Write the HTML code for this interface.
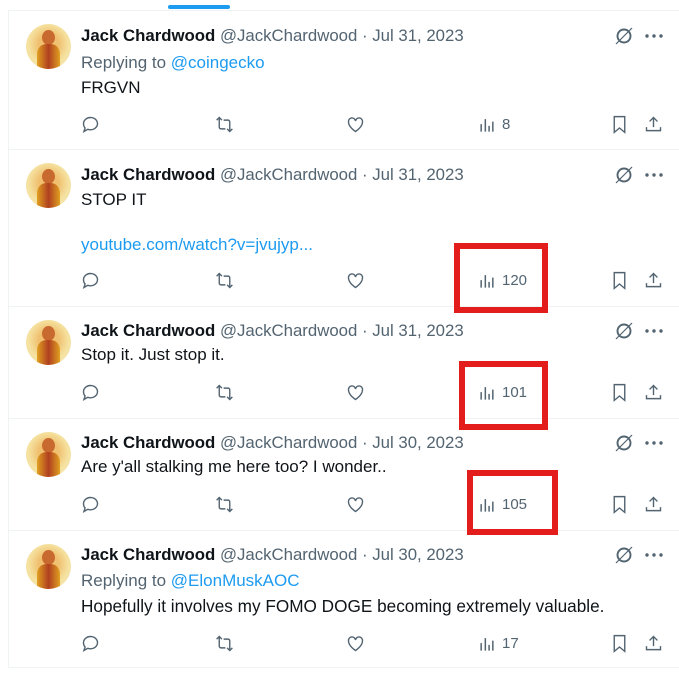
<!DOCTYPE html>
<html><head><meta charset="utf-8"><style>
*{margin:0;padding:0;box-sizing:border-box}
body{width:679px;height:678px;background:#fff;font-family:"Liberation Sans",sans-serif;position:relative;overflow:hidden;color:#0f1419}
.vl{position:absolute;left:8px;top:10px;width:1px;height:658px;background:#eff3f4}
.sep{position:absolute;left:8px;right:0;height:1px;background:#eff3f4}
.t{position:absolute;left:0;width:679px}
.av{position:absolute;left:26px;width:45px;height:45px;border-radius:50%;overflow:hidden;background:radial-gradient(circle at 50% 45%,#f0c070 0 30%,#f5e2a0 60%,#f2e6b8 100%)}
.av::before{content:"";position:absolute;left:16px;top:6px;width:13px;height:15px;border-radius:50%;background:#c86a30}
.av::after{content:"";position:absolute;left:11px;top:20px;width:23px;height:25px;background:linear-gradient(90deg,#e0a020,#b04020 50%,#e0a020);border-radius:40% 40% 0 0}
.tx{position:absolute;left:81px;font-size:17px;white-space:nowrap;line-height:20px}
.h{font-size:16.8px}
.n{font-weight:bold}
.g{color:#536471}
.b{color:#1d9bf0}
.ic{position:absolute}
.cnt{position:absolute;font-size:15px;color:#536471}
.red{position:absolute;border:6px solid #e31c1c}
</style></head><body>
<div style="position:absolute;left:168px;top:5px;width:62px;height:4px;border-radius:2px;background:#1d9bf0"></div>
<div class="vl"></div>
<div class="sep" style="top:10px"></div>
<div class="sep" style="top:149px"></div>
<div class="sep" style="top:306px"></div>
<div class="sep" style="top:418px"></div>
<div class="sep" style="top:530px"></div>
<div class="sep" style="top:667px"></div>

<svg width="0" height="0" style="position:absolute">
<defs>
<g id="reply"><path d="M4 11a8 7 0 1 1 5 6.5L4.5 20l1.3-4A7 7 0 0 1 4 11z" fill="none" stroke="#536471" stroke-width="1.6"/></g>
<g id="rt" fill="none" stroke="#536471" stroke-width="1.6"><path d="M3 7l3-3 3 3M6 4v11a2 2 0 0 0 2 2h5"/><path d="M21 17l-3 3-3-3M18 20V9a2 2 0 0 0-2-2h-5"/></g>
<g id="like"><path d="M12 20s-8-5-8-11a4 4 0 0 1 8-1 4 4 0 0 1 8 1c0 6-8 11-8 11z" fill="none" stroke="#536471" stroke-width="1.6"/></g>
<g id="views" stroke="#536471" stroke-width="1.8"><path d="M5 20V11M10 20V5M14.5 20V13M19 20V8"/></g>
<g id="bm"><path d="M6 3h12v18l-6-5-6 5z" fill="none" stroke="#536471" stroke-width="1.6"/></g>
<g id="sh" fill="none" stroke="#536471" stroke-width="1.6"><path d="M12 15V4M7.5 8.5 12 4l4.5 4.5M4 15v4h16v-4"/></g>
<g id="grok" fill="none" stroke="#536471" stroke-width="1.9"><circle cx="12" cy="12" r="6.5"/><path d="M4 20 20 4" stroke-width="1.2"/></g>
<g id="more" fill="#536471"><circle cx="5" cy="12" r="1.7"/><circle cx="12" cy="12" r="1.7"/><circle cx="19" cy="12" r="1.7"/></g>
</defs></svg>

<div class="t" style="top:10px">
<div class="av" style="top:14px"></div>
<div class="tx h" style="top:16px"><span class="n">Jack Chardwood</span> <span class="g">@JackChardwood · Jul 31, 2023</span></div>
<div class="tx g" style="top:43px">Replying to <span class="b">@coingecko</span></div>
<div class="tx" style="top:68px">FRGVN</div>
<svg class="ic" style="left:612px;top:14px" width="24" height="24"><use href="#grok"/></svg>
<svg class="ic" style="left:642px;top:14px" width="24" height="24"><use href="#more"/></svg>
<svg class="ic" style="left:80px;top:104px" width="21" height="21" viewBox="0 0 24 24"><use href="#reply"/></svg>
<svg class="ic" style="left:214px;top:104px" width="21" height="21" viewBox="0 0 24 24"><use href="#rt"/></svg>
<svg class="ic" style="left:345px;top:104px" width="21" height="21" viewBox="0 0 24 24"><use href="#like"/></svg>
<svg class="ic" style="left:477px;top:105px" width="20" height="20" viewBox="0 0 24 24"><use href="#views"/></svg>
<div class="cnt" style="left:502px;top:106px">8</div>
<svg class="ic" style="left:609px;top:104px" width="21" height="21" viewBox="0 0 24 24"><use href="#bm"/></svg>
<svg class="ic" style="left:643px;top:104px" width="21" height="21" viewBox="0 0 24 24"><use href="#sh"/></svg>
</div>

<div class="t" style="top:149px">
<div class="av" style="top:14px"></div>
<div class="tx h" style="top:16px"><span class="n">Jack Chardwood</span> <span class="g">@JackChardwood · Jul 31, 2023</span></div>
<div class="tx" style="top:41px">STOP IT</div>
<div class="tx b" style="top:86px">youtube.com/watch?v=jvujyp...</div>
<svg class="ic" style="left:612px;top:14px" width="24" height="24"><use href="#grok"/></svg>
<svg class="ic" style="left:642px;top:14px" width="24" height="24"><use href="#more"/></svg>
<svg class="ic" style="left:80px;top:121px" width="21" height="21" viewBox="0 0 24 24"><use href="#reply"/></svg>
<svg class="ic" style="left:214px;top:121px" width="21" height="21" viewBox="0 0 24 24"><use href="#rt"/></svg>
<svg class="ic" style="left:345px;top:121px" width="21" height="21" viewBox="0 0 24 24"><use href="#like"/></svg>
<svg class="ic" style="left:477px;top:122px" width="20" height="20" viewBox="0 0 24 24"><use href="#views"/></svg>
<div class="cnt" style="left:502px;top:123px">120</div>
<svg class="ic" style="left:609px;top:121px" width="21" height="21" viewBox="0 0 24 24"><use href="#bm"/></svg>
<svg class="ic" style="left:643px;top:121px" width="21" height="21" viewBox="0 0 24 24"><use href="#sh"/></svg>
</div>

<div class="t" style="top:306px">
<div class="av" style="top:14px"></div>
<div class="tx h" style="top:15px"><span class="n">Jack Chardwood</span> <span class="g">@JackChardwood · Jul 31, 2023</span></div>
<div class="tx" style="top:39px">Stop it. Just stop it.</div>
<svg class="ic" style="left:612px;top:13px" width="24" height="24"><use href="#grok"/></svg>
<svg class="ic" style="left:642px;top:13px" width="24" height="24"><use href="#more"/></svg>
<svg class="ic" style="left:80px;top:76px" width="21" height="21" viewBox="0 0 24 24"><use href="#reply"/></svg>
<svg class="ic" style="left:214px;top:76px" width="21" height="21" viewBox="0 0 24 24"><use href="#rt"/></svg>
<svg class="ic" style="left:345px;top:76px" width="21" height="21" viewBox="0 0 24 24"><use href="#like"/></svg>
<svg class="ic" style="left:477px;top:77px" width="20" height="20" viewBox="0 0 24 24"><use href="#views"/></svg>
<div class="cnt" style="left:502px;top:78px">101</div>
<svg class="ic" style="left:609px;top:76px" width="21" height="21" viewBox="0 0 24 24"><use href="#bm"/></svg>
<svg class="ic" style="left:643px;top:76px" width="21" height="21" viewBox="0 0 24 24"><use href="#sh"/></svg>
</div>

<div class="t" style="top:418px">
<div class="av" style="top:14px"></div>
<div class="tx h" style="top:15px"><span class="n">Jack Chardwood</span> <span class="g">@JackChardwood · Jul 30, 2023</span></div>
<div class="tx" style="top:39px">Are y'all stalking me here too? I wonder..</div>
<svg class="ic" style="left:612px;top:13px" width="24" height="24"><use href="#grok"/></svg>
<svg class="ic" style="left:642px;top:13px" width="24" height="24"><use href="#more"/></svg>
<svg class="ic" style="left:80px;top:76px" width="21" height="21" viewBox="0 0 24 24"><use href="#reply"/></svg>
<svg class="ic" style="left:214px;top:76px" width="21" height="21" viewBox="0 0 24 24"><use href="#rt"/></svg>
<svg class="ic" style="left:345px;top:76px" width="21" height="21" viewBox="0 0 24 24"><use href="#like"/></svg>
<svg class="ic" style="left:477px;top:77px" width="20" height="20" viewBox="0 0 24 24"><use href="#views"/></svg>
<div class="cnt" style="left:502px;top:78px">105</div>
<svg class="ic" style="left:609px;top:76px" width="21" height="21" viewBox="0 0 24 24"><use href="#bm"/></svg>
<svg class="ic" style="left:643px;top:76px" width="21" height="21" viewBox="0 0 24 24"><use href="#sh"/></svg>
</div>

<div class="t" style="top:530px">
<div class="av" style="top:14px"></div>
<div class="tx h" style="top:15px"><span class="n">Jack Chardwood</span> <span class="g">@JackChardwood · Jul 30, 2023</span></div>
<div class="tx g" style="top:41px">Replying to <span class="b">@ElonMuskAOC</span></div>
<div class="tx" style="top:66px;font-size:17.2px">Hopefully it involves my FOMO DOGE becoming extremely valuable.</div>
<svg class="ic" style="left:612px;top:13px" width="24" height="24"><use href="#grok"/></svg>
<svg class="ic" style="left:642px;top:13px" width="24" height="24"><use href="#more"/></svg>
<svg class="ic" style="left:80px;top:103px" width="21" height="21" viewBox="0 0 24 24"><use href="#reply"/></svg>
<svg class="ic" style="left:214px;top:103px" width="21" height="21" viewBox="0 0 24 24"><use href="#rt"/></svg>
<svg class="ic" style="left:345px;top:103px" width="21" height="21" viewBox="0 0 24 24"><use href="#like"/></svg>
<svg class="ic" style="left:477px;top:104px" width="20" height="20" viewBox="0 0 24 24"><use href="#views"/></svg>
<div class="cnt" style="left:502px;top:105px">17</div>
<svg class="ic" style="left:609px;top:103px" width="21" height="21" viewBox="0 0 24 24"><use href="#bm"/></svg>
<svg class="ic" style="left:643px;top:103px" width="21" height="21" viewBox="0 0 24 24"><use href="#sh"/></svg>
</div>

<div class="red" style="left:454px;top:243px;width:94px;height:70px"></div>
<div class="red" style="left:459px;top:361px;width:89px;height:69px"></div>
<div class="red" style="left:467px;top:470px;width:91px;height:65px"></div>
</body></html>
